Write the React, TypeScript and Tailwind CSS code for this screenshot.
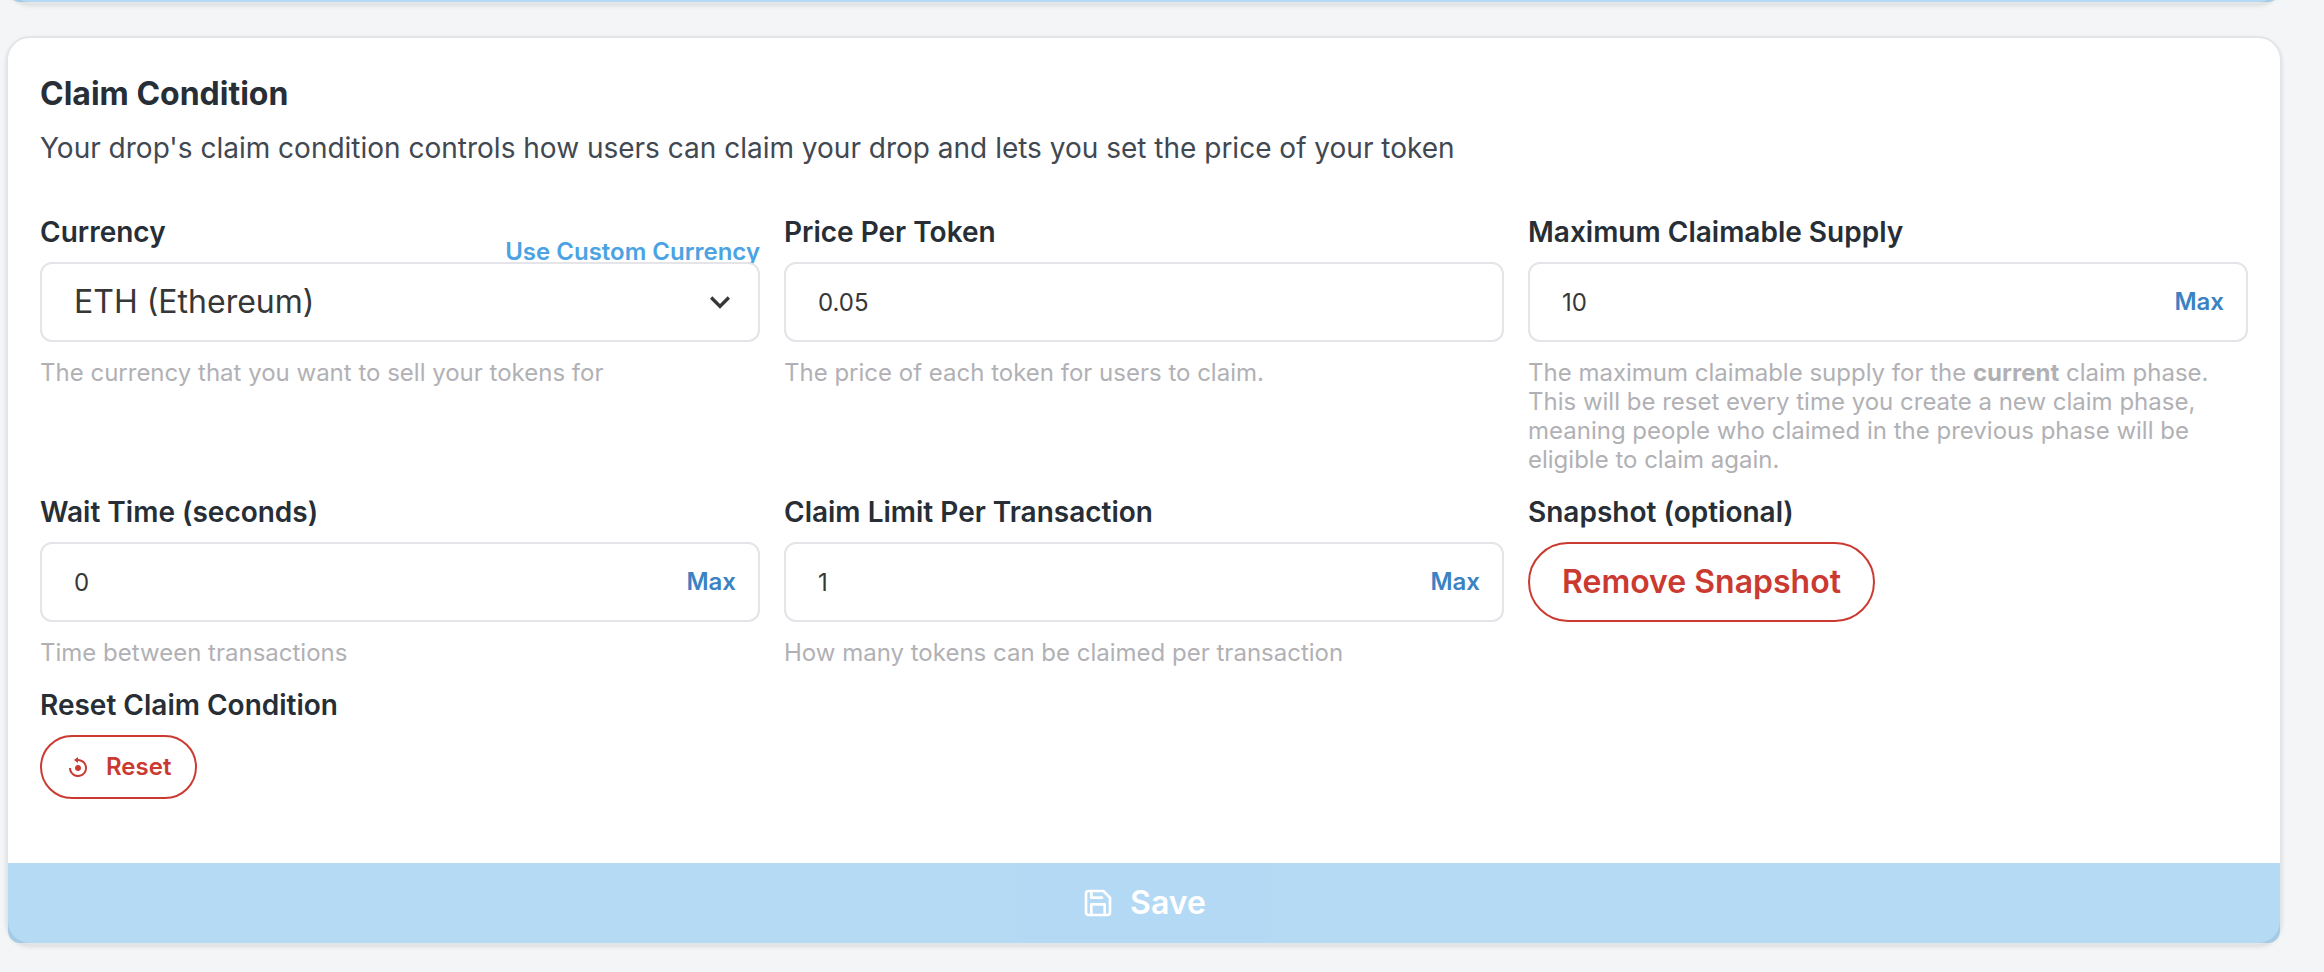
import type { ReactNode } from "react";
import { BiReset } from "react-icons/bi";
import { FiSave } from "react-icons/fi";

const CARD =
  "rounded-[24px] border-2 border-[#e4e5e8] bg-white shadow-[0_2px_4px_rgba(0,0,0,0.1)]";
const SAVE =
  "flex h-20 w-full items-center justify-center gap-4 rounded-b-xl bg-[#46a2e4] text-[32px] font-semibold text-white opacity-40";
const CONTROL =
  "h-20 w-full rounded-xl border-2 border-[#e4e4e9] bg-white px-8 text-[#373737] outline-none";

function Field({ id, label, help, children }: { id: string; label: string; help?: ReactNode; children: ReactNode }) {
  return (
    <div className="flex min-w-0 flex-col items-start">
      <label htmlFor={id} className="mb-2 text-[28px] leading-[44px] font-semibold text-[#272e36]">
        {label}
      </label>
      {children}
      {help && <p className="mt-4 text-2xl leading-[29px] text-[#b1b1b5]">{help}</p>}
    </div>
  );
}

function NumberInput({ id, value, max }: { id: string; value: string; max?: boolean }) {
  return (
    <div className="relative w-full">
      <input id={id} type="text" inputMode="decimal" defaultValue={value} className={`${CONTROL} text-2xl`} />
      {max && (
        <button type="button" className="absolute inset-y-0 right-6 text-2xl font-semibold text-[#3a82c4]">
          Max
        </button>
      )}
    </div>
  );
}

export default function App() {
  return (
    <main className="min-h-screen overflow-hidden bg-[#f4f5f7] pr-[42px] pb-6 pl-[6px] font-['Inter',sans-serif]">
      {/* Foot of the preceding card, scrolled mostly out of view */}
      <div className={`-mt-20 ${CARD}`} aria-hidden="true">
        <div className={SAVE} />
      </div>
      <form className={`mt-8 ${CARD}`}>
        <div className="px-8 pt-8 pb-16">
          <h2 className="text-[32px] leading-[48px] font-bold text-[#272e36]">Claim Condition</h2>
          <p className="mt-2 text-[28px] leading-[44px] text-[#414851]">
            Your drop's claim condition controls how users can claim your drop and lets you set the price of your token
          </p>

          <div className="mt-10 grid grid-cols-3 gap-x-6 gap-y-4">
            <Field id="currency" label="Currency" help="The currency that you want to sell your tokens for">
              <div className="relative w-full">
                <button
                  type="button"
                  className="absolute right-0 bottom-full -mb-1 text-2xl leading-[29px] font-semibold text-[#4ba3e3]"
                >
                  Use Custom Currency
                </button>
                <select id="currency" className={`${CONTROL} relative block appearance-none text-[32px]`}>
                  <option>ETH (Ethereum)</option>
                </select>
                <svg
                  viewBox="0 0 24 24"
                  fill="#373737"
                  className="pointer-events-none absolute top-5 right-5 size-10"
                  aria-hidden="true"
                >
                  <path d="M16.59 8.59L12 13.17 7.41 8.59 6 10l6 6 6-6z" />
                </svg>
              </div>
            </Field>
            <Field id="price" label="Price Per Token" help="The price of each token for users to claim.">
              <NumberInput id="price" value="0.05" />
            </Field>
            <Field
              id="supply"
              label="Maximum Claimable Supply"
              help={
                <>
                  The maximum claimable supply for the <strong>current</strong> claim phase. This will be reset every
                  time you create a new claim phase, meaning people who claimed in the previous phase will be eligible
                  to claim again.
                </>
              }
            >
              <NumberInput id="supply" value="10" max />
            </Field>
            <Field id="wait" label="Wait Time (seconds)" help="Time between transactions">
              <NumberInput id="wait" value="0" max />
            </Field>
            <Field
              id="limit"
              label="Claim Limit Per Transaction"
              help="How many tokens can be claimed per transaction"
            >
              <NumberInput id="limit" value="1" max />
            </Field>
            <Field id="snapshot" label="Snapshot (optional)">
              <button
                id="snapshot"
                type="button"
                className="h-20 rounded-full border-2 border-[#cb3a31] px-8 text-[32px] font-semibold text-[#cb3a31]"
              >
                Remove Snapshot
              </button>
            </Field>
            <Field id="reset" label="Reset Claim Condition">
              <button
                id="reset"
                type="button"
                className="flex h-16 items-center gap-4 rounded-full border-2 border-[#cb3a31] px-6 text-2xl font-semibold text-[#cb3a31]"
              >
                <BiReset className="size-6" aria-hidden="true" />
                Reset
              </button>
            </Field>
          </div>
        </div>
        <button type="submit" disabled className={SAVE}>
          <FiSave className="size-8" aria-hidden="true" />
          Save
        </button>
      </form>
    </main>
  );
}
